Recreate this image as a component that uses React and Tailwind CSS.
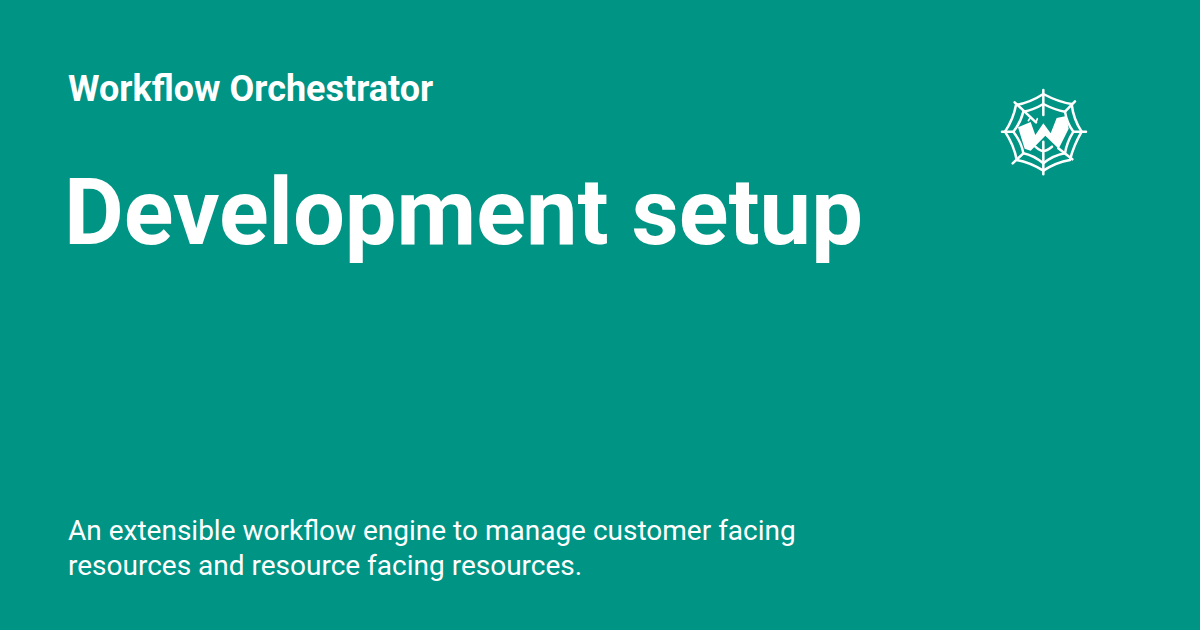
const Logo = () => (
  <svg width="105" height="105" viewBox="0 0 315 315" fill="none" stroke="#fff" strokeWidth="7.5" strokeLinecap="round" strokeLinejoin="round">
    <path d="M160 30V105M160 185V283M36 155H70M250 155H288M74 67L138 127M255 64L225 95M68 250L100 220M205 205L247 238" />
    <path d="M160 42Q205 66 245 72Q250 118 275 155Q250 198 240 240Q198 247 160 272Q120 247 80 240Q73 198 45 155Q70 118 78 75Q120 68 160 42Z" />
    <path d="M160 72Q195 90 225 95Q230 128 250 155Q230 188 225 220Q190 226 160 250Q130 226 100 220Q95 188 70 155Q92 128 100 95Q130 90 160 72Z" />
    <path d="M136 200Q150 213 160 213Q170 213 186 200" />
    <path d="M115 122L122 112M138 127L142 116" strokeWidth="5" />
    <polygon fill="#fff" stroke="none" points="84,142 122,126 136,165 160,130 182,160 200,114 229,108 236,146 206,206 166,167 122,212 104,206" />
  </svg>
)

export default function App() {
  return (
    <div className="w-[1200px] h-[630px] bg-[#009485] text-white font-['Roboto',sans-serif] flex flex-col pl-[68px] overflow-hidden">
      <div className="flex justify-between pr-[105px] pt-[66px]">
        <div className="text-[36px] leading-[46px] font-bold">Workflow Orchestrator</div>
        <div className="relative w-0">
          <div className="absolute right-0 top-[14px]">
            <Logo />
          </div>
        </div>
      </div>
      <h1 className="text-[92px] leading-[108px] font-bold mt-[47px] -ml-[4px]">Development setup</h1>
      <p className="mt-auto mb-[47px] text-[28px] leading-[35px] w-[800px]">
        An extensible workflow engine to manage customer facing resources and resource facing resources.
      </p>
    </div>
  )
}
